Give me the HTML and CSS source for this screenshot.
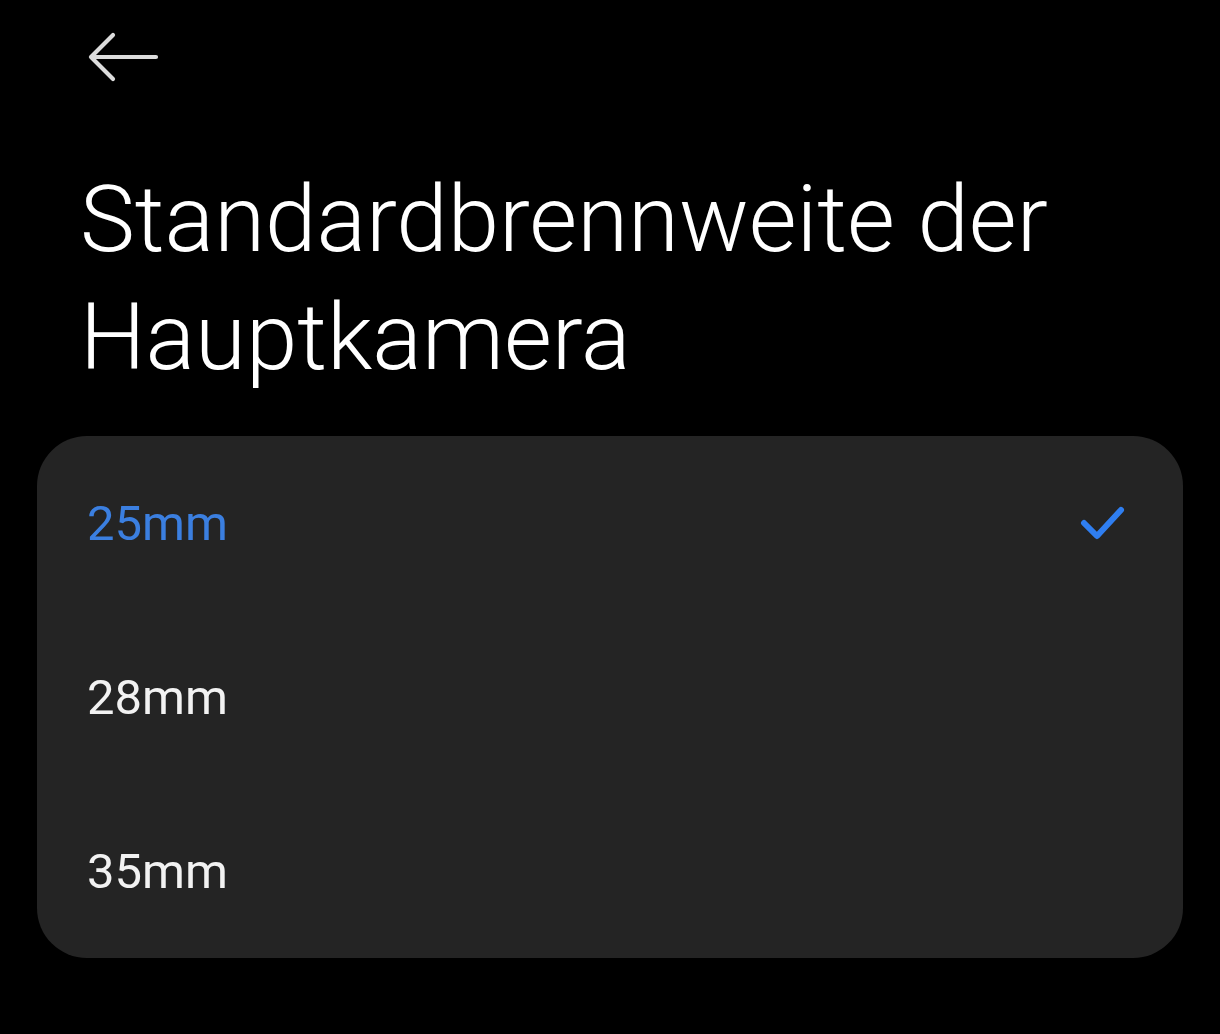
FILE: index.html
```html
<!DOCTYPE html>
<html lang="de">
<head>
<meta charset="utf-8">
<link rel="stylesheet" href="styles.css">
</head>
<body>
<div class="screen">
  <header class="topbar">
    <button class="back" aria-label="Zurück">
      <svg width="72" height="52" viewBox="0 0 72 52">
        <path d="M25 4 L3 26 L25 48 M3 26 H68" fill="none" stroke="#dcdcdc" stroke-width="4.2" stroke-linecap="round" stroke-linejoin="round"/>
      </svg>
    </button>
  </header>
  <h1 class="title">Standardbrennweite der Hauptkamera</h1>
  <ul class="card">
    <li class="option selected"><span>25mm</span>
      <svg class="check" width="48" height="40" viewBox="0 0 48 40">
        <path d="M5 20 L18 33 L42 7" fill="none" stroke="#2f7ef0" stroke-width="6" stroke-linecap="round" stroke-linejoin="round"/>
      </svg>
    </li>
    <li class="option"><span>28mm</span></li>
    <li class="option"><span>35mm</span></li>
  </ul>
</div>
</body>
</html>
```
FILE: styles.css
```css
html, body {
  margin: 0;
  padding: 0;
  background: #000;
}
body {
  font-family: Roboto, "Noto Sans", sans-serif;
  color: #fff;
}
.screen {
  width: 1220px;
  height: 1034px;
  overflow: hidden;
}
.topbar {
  height: 110px;
  padding: 31px 0 0 88px;
  box-sizing: border-box;
}
.back {
  background: none;
  border: 0;
  padding: 0;
  display: block;
}
.back svg { display: block; }
.title {
  margin: 51px 0 0 80px;
  font-weight: 300;
  font-size: 92.5px;
  line-height: 118px;
  letter-spacing: 0;
  width: 1100px;
  color: #fff;
}
.card {
  list-style: none;
  margin: 39px 37px 0 37px;
  padding: 0;
  background: #242424;
  border-radius: 50px;
}
.option {
  height: 174px;
  display: flex;
  align-items: center;
  justify-content: space-between;
  padding: 0 56px 0 50px;
  font-size: 49px;
  font-weight: 400;
  color: #f2f2f2;
}
.option.selected { color: #3b7fe0; }
.check { display: block; }
```
